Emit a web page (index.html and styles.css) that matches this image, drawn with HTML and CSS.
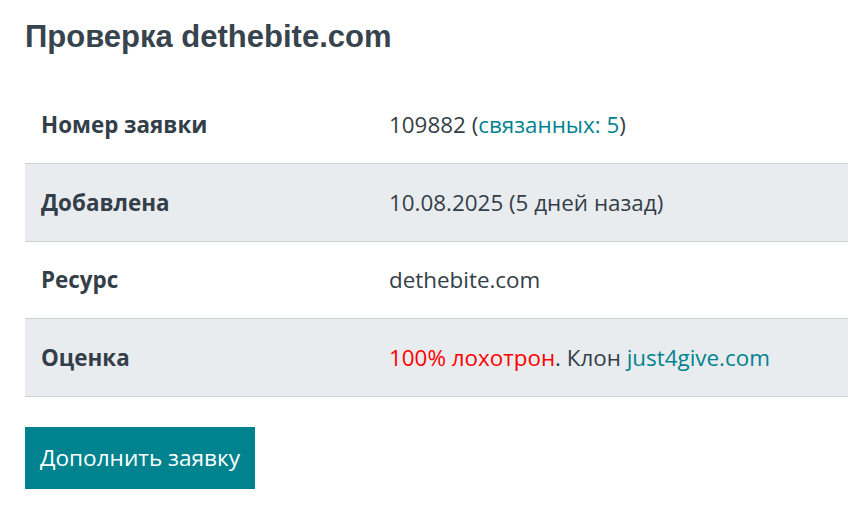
FILE: index.html
```html
<!DOCTYPE html>
<html lang="ru">
<head>
<meta charset="utf-8">
<title>Проверка dethebite.com</title>
<link rel="stylesheet" href="styles.css">
</head>
<body>
<main class="page">
  <h1 class="title">Проверка dethebite.com</h1>
  <table class="info">
    <tr>
      <th>Номер заявки</th>
      <td>109882 (<a href="#" class="link">связанных: 5</a>)</td>
    </tr>
    <tr class="alt">
      <th>Добавлена</th>
      <td>10.08.2025 (5 дней назад)</td>
    </tr>
    <tr>
      <th>Ресурс</th>
      <td>dethebite.com</td>
    </tr>
    <tr class="alt">
      <th>Оценка</th>
      <td><span class="danger">100% лохотрон</span>. Клон <a href="#" class="link">just4give.com</a></td>
    </tr>
  </table>
  <button class="btn">Дополнить заявку</button>
</main>
</body>
</html>
```
FILE: styles.css
```css
html, body {
  margin: 0;
  padding: 0;
  background: #fff;
  overflow: hidden;
}
.page {
  padding: 17px 0 0 25px;
  font-family: "Open Sans", "Noto Sans", sans-serif;
  color: #343e48;
}
.title {
  font-family: "Liberation Sans", Arial, sans-serif;
  font-weight: bold;
  font-size: 31px;
  line-height: 40px;
  margin: 0 0 29px 0;
  color: #37434d;
}
.info {
  width: calc(100% + 20px);
  border-collapse: collapse;
  font-size: 22.4px;
}
.info tr {
  height: 77.6px;
  border-bottom: 1px solid #cfd2d5;
}
.info tr.alt {
  background: #e9ecef;
}
.info th {
  text-align: left;
  font-weight: bold;
  padding: 0 16px;
  width: 332px;
  color: #343e48;
}
.info td {
  padding: 0;
}
.link {
  color: #00838f;
  text-decoration: none;
}
.danger {
  color: #ff0000;
}
.btn {
  display: block;
  margin-top: 30px;
  background: #00838f;
  color: #fff;
  border: none;
  font-family: "Open Sans", "Noto Sans", sans-serif;
  font-size: 22.6px;
  height: 62px;
  padding: 0 15px;
  cursor: pointer;
}
```
